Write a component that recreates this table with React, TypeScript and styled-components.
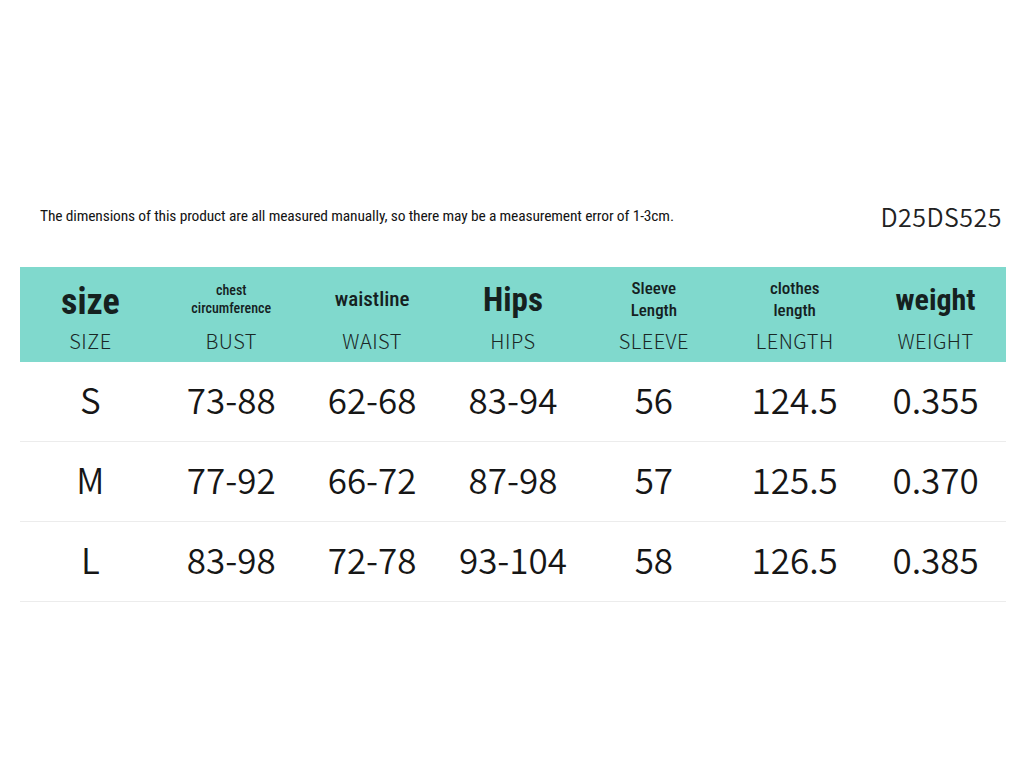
import styled, { createGlobalStyle } from 'styled-components'

const GlobalStyle = createGlobalStyle`
  html, body {
    margin: 0;
    background: #ffffff;
  }
`

const narrow = `"Roboto Condensed", "Liberation Sans Narrow", "DejaVu Sans Condensed", "Roboto", sans-serif`
const plain = `"Noto Sans CJK SC", "Noto Sans", sans-serif`

const Page = styled.div`
  width: 1024px;
  height: 768px;
  box-sizing: border-box;
  padding: 198px 18px 0 20px;
  display: flex;
  flex-direction: column;
`

const Caption = styled.div`
  display: flex;
  align-items: center;
  justify-content: space-between;
  height: 36px;
  padding: 0 4px 0 20px;
  margin-bottom: 33px;
`

const Note = styled.span`
  font-family: ${narrow};
  font-stretch: condensed;
  font-size: 15.5px;
  font-weight: 400;
  color: #141414;
  letter-spacing: -0.15px;
`

const Code = styled.span`
  font-family: ${plain};
  font-size: 25px;
  font-weight: 350;
  color: #222;
  letter-spacing: 0.5px;
`

const Table = styled.div`
  display: flex;
  flex-direction: column;
  width: 986px;
`

const HeadRow = styled.div`
  display: grid;
  grid-template-columns: repeat(7, 1fr);
  height: 95px;
  background: #80d9cd;
`

const HeadCell = styled.div`
  display: flex;
  flex-direction: column;
  align-items: center;
  padding-top: 8px;
`

const Label = styled.div<{ size: number; bold?: boolean; shift?: number }>`
  height: 48px;
  display: flex;
  align-items: center;
  justify-content: center;
  text-align: center;
  font-family: ${narrow};
  font-stretch: condensed;
  font-size: ${p => p.size}px;
  font-weight: ${p => (p.bold ? 700 : 500)};
  line-height: 1.3;
  color: #15211f;
  padding-top: ${p => p.shift ?? 0}px;
  box-sizing: border-box;
`

const Sub = styled.div`
  margin-top: 5px;
  height: 26px;
  line-height: 26px;
  font-family: ${plain};
  font-size: 20px;
  font-weight: 300;
  letter-spacing: 0.5px;
  color: #1a2725;
`

const Row = styled.div`
  display: grid;
  grid-template-columns: repeat(7, 1fr);
  height: 79px;
  border-bottom: 1px solid #ececec;
`

const Cell = styled.div`
  display: flex;
  align-items: center;
  justify-content: center;
  padding-bottom: 6px;
  font-family: ${plain};
  font-size: 35px;
  font-weight: 350;
  color: #161616;
`

const heads = [
  { top: 'size', size: 36, bold: true, sub: 'SIZE', shift: 6 },
  { top: 'chest\ncircumference', size: 14, sub: 'BUST', shift: 0 },
  { top: 'waistline', size: 21, sub: 'WAIST', shift: 2 },
  { top: 'Hips', size: 33, bold: true, sub: 'HIPS', shift: 2 },
  { top: 'Sleeve\nLength', size: 17, sub: 'SLEEVE', shift: 0 },
  { top: 'clothes\nlength', size: 17, sub: 'LENGTH', shift: -3 },
  { top: 'weight', size: 30, bold: true, sub: 'WEIGHT', shift: -4 },
]

const rows = [
  ['S', '73-88', '62-68', '83-94', '56', '124.5', '0.355'],
  ['M', '77-92', '66-72', '87-98', '57', '125.5', '0.370'],
  ['L', '83-98', '72-78', '93-104', '58', '126.5', '0.385'],
]

export default function App() {
  return (
    <>
      <GlobalStyle />
      <Page>
        <Caption>
          <Note>
            The dimensions of this product are all measured manually, so there may be a measurement error of 1-3cm.
          </Note>
          <Code>D25DS525</Code>
        </Caption>
        <Table>
          <HeadRow>
            {heads.map(h => (
              <HeadCell key={h.sub}>
                <Label size={h.size} bold={h.bold} shift={h.shift}>
                  <span style={{ whiteSpace: 'pre-line' }}>{h.top}</span>
                </Label>
                <Sub>{h.sub}</Sub>
              </HeadCell>
            ))}
          </HeadRow>
          {rows.map(r => (
            <Row key={r[0]}>
              {r.map((v, i) => (
                <Cell key={i}>{v}</Cell>
              ))}
            </Row>
          ))}
        </Table>
      </Page>
    </>
  )
}
